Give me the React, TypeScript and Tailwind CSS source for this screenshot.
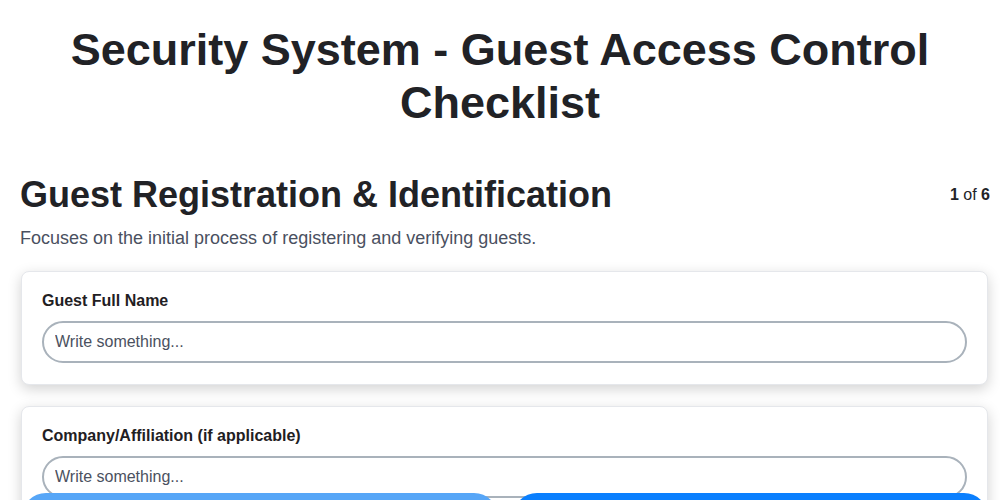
import React from "react";

const font = { fontFamily: '"Liberation Sans", Arial, sans-serif' };

function Field({ label }: { label: string }) {
  return (
    <div className="rounded-lg border border-[#e5e7eb] bg-white px-[20px] pt-[20px] pb-[21px] shadow-[0_4px_14px_rgba(0,0,0,0.18)]">
      <label className="block text-[16px] font-bold text-[#1f2023] leading-[18px] mb-[11px]">{label}</label>
      <input
        placeholder="Write something..."
        className="block w-full h-[42px] rounded-full border-2 border-[#a9b2bb] bg-white px-[11px] text-[16px] text-[#374151] placeholder:text-[#4b5160] outline-none"
        style={font}
      />
    </div>
  );
}

export default function App() {
  return (
    <div className="min-h-[500px] bg-white text-[#222327]" style={font}>
      <h1 className="px-[20px] pt-[23px] text-center text-[45px] font-bold leading-[53px] text-[#212226]">
        Security System - Guest Access Control Checklist
      </h1>
      <div className="pl-[20px] pr-[10px]">
        <div className="mt-[44px] flex items-start justify-between">
          <h2 className="text-[36px] font-bold leading-[44px] text-[#212226]">Guest Registration &amp; Identification</h2>
          <div className="pt-[10px] text-[16px] text-[#222327]">
            <span className="font-bold">1</span> of <span className="font-bold">6</span>
          </div>
        </div>
        <p className="mt-[10px] text-[18px] leading-[22px] text-[#4a5060]">
          Focuses on the initial process of registering and verifying guests.
        </p>
        <div className="mt-[22px] flex flex-col gap-[21px] pr-[2px] pl-[1px]">
          <Field label="Guest Full Name" />
          <Field label="Company/Affiliation (if applicable)" />
        </div>
      </div>
      <div className="fixed left-0 right-0 top-[493px] flex gap-[15px] pl-[22px] pr-[12px]">
        <button className="h-[48px] flex-1 rounded-[24px] bg-[#57a6f7]" />
        <button className="h-[48px] flex-1 rounded-[24px] bg-[#0a7ffe]" />
      </div>
    </div>
  );
}
